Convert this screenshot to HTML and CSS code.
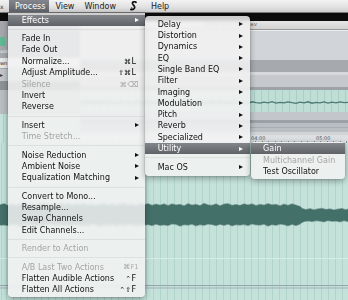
FILE: index.html
```html
<!DOCTYPE html>
<html>
<head>
<meta charset="utf-8">
<title>Process menu</title>
<link rel="stylesheet" href="styles.css">
</head>
<body>
<div class="screen">
  <div class="menubar">
    <span class="mb-x">x</span>
    <span class="mb-item active">Process</span>
    <span class="mb-item">View</span>
    <span class="mb-item">Window</span>
    <span class="mb-item mb-script"><svg width="7" height="10" viewBox="0 0 7 10"><path d="M6 1.3 C4.4 0.2 2.1 0.8 2.5 2.6 C2.8 3.9 4.7 4.6 4.7 6.3 C4.7 8.1 2.6 9.2 0.9 8.4" fill="none" stroke="#111" stroke-width="1.7" stroke-linecap="round"/><path d="M0.9 8.4 C1.9 8.1 2.3 7.3 1.8 6.7" fill="none" stroke="#111" stroke-width="1" stroke-linecap="round"/></svg></span>
    <span class="mb-item">Help</span>
  </div>
  <div class="toolbar"></div>
  <div class="workspace">
    <div class="sidebar">
      <div class="sb-top"></div>
      <div class="sb-icon"><span class="sb-green"></span></div>
      <div class="sb-label">ade</div>
      <div class="sb-field">wn</div>
      <div class="sb-btn">▸</div>
      <div class="sb-gray"></div>
      <div class="sb-dark"></div>
      <div class="sb-teal"></div>
    </div>
    <div class="tracks">
      <div class="doc-title">Turbo funk Riff.wav</div>
      <div class="panel-a"></div>
      <div class="band-a"></div>
      <div class="line-a"></div>
      <div class="panel-b"></div>
      <div class="line-b"></div>
      <div class="track"><svg width="268" height="22" viewBox="0 0 268 22"><polyline fill="none" stroke="#4d7a72" stroke-width="1.3" points="0,12 4,13 8,11.6 12,13.2 16,12.1 20,13.4 24,11.8 28,12.9 32,12.2 36,13.5 40,11.7 44,12.8 48,12.3 52,13.3 56,11.9 60,12.7 64,13.1 68,11.8 72,12.6 76,13.4 80,12 84,12.9 88,11.7 92,13.2 96,12.4 100,13 104,11.9 108,12.8 112,12.2 116,13.3 120,11.8 124,12.7 128,13.1 132,12 136,12.9 140,11.6 144,13.2 148,12.3 152,13 156,11.9 160,12.8 164,12.2 168,13.4 172,11.8 176,12.6 180,13.2 184,12.1 188,12.9 192,11.7 196,13.1 200,12.4 204,12.9 208,11.9 212,12.7 216,13.3 220,12.1 224,12.8 228,11.8 232,13.2 236,12.3 240,12.9 244,11.9 248,13.1 252,12.2 256,12.8 260,11.9 264,12.6 268,12.3"/></svg></div>
      <div class="panel-c"></div>
      <div class="line-c"></div>
      <div class="panel-d"></div>
      <div class="gap-d"></div>
      <div class="ruler"><span>04:00</span><span>05:00</span></div>
    </div>
  </div>
  <div class="editor">
    <svg width="348" height="157" viewBox="0 0 348 157">
      <line x1="0" y1="115.5" x2="348" y2="115.5" stroke="#d6ece6" stroke-width="1"/>
      <line x1="0" y1="142.5" x2="348" y2="142.5" stroke="#96a4ae" stroke-width="1"/>
      <line x1="0" y1="145" x2="348" y2="145" stroke="#a3afb8" stroke-width="1"/>
      <path fill="#44706a" stroke="rgba(70,110,104,0.45)" stroke-width="1.4" d="M0 62 L4 60.8 L8 62.6 L12 61.2 L16 63 L20 61.5 L24 60.6 L28 62.4 L32 61 L36 62.8 L40 61.4 L44 60.5 L48 62.2 L52 61.6 L56 63.1 L60 61 L64 62 L68 60.7 L72 62.5 L76 61.3 L80 62 L84 60.8 L88 62.6 L92 61.2 L96 63 L100 61.5 L104 60.6 L108 62.4 L112 61 L116 62.8 L120 61.4 L124 60.5 L128 62.2 L132 61.6 L136 63.1 L140 61 L144 62 L148 60.7 L152 62.5 L156 61.3 L160 62.3 L164 61 L168 62.7 L172 60.9 L176 62.1 L180 61.4 L184 63 L188 60.8 L192 62.2 L196 61.5 L200 62.8 L204 60.6 L208 61.9 L212 62.5 L216 61.1 L220 62.9 L224 61.3 L228 60.7 L232 62.4 L236 61.6 L240 62.6 L244 61 L248 62.1 L252 60.9 L256 62.7 L260 61.4 L264 62.3 L268 60.8 L272 62 L276 61.5 L280 63 L284 61.2 L288 62.4 L292 60.9 L296 62.2 L300 63.5 L302 65.5 L306 66.8 L310 65.8 L314 67 L318 66 L322 65.4 L326 66.6 L330 65.9 L334 67.1 L338 66.2 L342 65.6 L346 66.9 L348 66 L348 78.5 L344 77.6 L340 78.8 L336 77.9 L332 78.3 L328 77.4 L324 78.7 L320 78 L316 77.5 L312 78.6 L308 77.8 L304 78.4 L301 80 L300 81 L296 82.4 L292 81.2 L288 82.8 L284 81.6 L280 80.9 L276 82.2 L272 81.4 L268 82.9 L264 81.1 L260 82 L256 81.7 L252 80.8 L248 82.5 L244 81.3 L240 82.1 L236 81.5 L232 82.7 L228 81 L224 82.3 L220 81.2 L216 82.6 L212 81.4 L208 80.9 L204 82.2 L200 81.6 L196 82.8 L192 81 L188 82.1 L184 81.5 L180 82.9 L176 81.3 L172 80.8 L168 82.4 L164 81.7 L160 82.2 L156 81 L152 82.6 L148 81.4 L144 82 L140 81.2 L136 82.6 L132 81.4 L128 80.9 L124 82.2 L120 81.6 L116 82.8 L112 81 L108 82.1 L104 81.5 L100 82.9 L96 81.3 L92 80.8 L88 82.4 L84 81.7 L80 82.2 L76 81 L72 82.6 L68 81.4 L64 82 L60 81.2 L56 82.6 L52 81.4 L48 80.9 L44 82.2 L40 81.6 L36 82.8 L32 81 L28 82.1 L24 81.5 L20 82.9 L16 81.3 L12 80.8 L8 82.4 L4 81.7 L0 82 Z"/>
    </svg>
  </div>

  <div class="menu process">
    <div class="mi hl"><span class="lb">Effects</span><span class="arrow"></span></div>
    <div class="sep"></div>
    <div class="mi"><span class="lb">Fade In</span></div>
    <div class="mi"><span class="lb">Fade Out</span></div>
    <div class="mi"><span class="lb">Normalize...</span><span class="sc"><span class="mod">⌘</span><span class="key">L</span></span></div>
    <div class="mi"><span class="lb">Adjust Amplitude...</span><span class="sc"><span class="mod">⇧⌘</span><span class="key">L</span></span></div>
    <div class="mi dis"><span class="lb">Silence</span><span class="sc"><span class="mod">⌘</span><span class="key">⌫</span></span></div>
    <div class="mi"><span class="lb">Invert</span></div>
    <div class="mi"><span class="lb">Reverse</span></div>
    <div class="sep"></div>
    <div class="mi"><span class="lb">Insert</span><span class="arrow"></span></div>
    <div class="mi dis"><span class="lb">Time Stretch...</span></div>
    <div class="sep"></div>
    <div class="mi"><span class="lb">Noise Reduction</span><span class="arrow"></span></div>
    <div class="mi"><span class="lb">Ambient Noise</span><span class="arrow"></span></div>
    <div class="mi"><span class="lb">Equalization Matching</span><span class="arrow"></span></div>
    <div class="sep"></div>
    <div class="mi"><span class="lb">Convert to Mono...</span></div>
    <div class="mi"><span class="lb">Resample...</span></div>
    <div class="mi"><span class="lb">Swap Channels</span></div>
    <div class="mi"><span class="lb">Edit Channels...</span></div>
    <div class="sep"></div>
    <div class="mi dis"><span class="lb">Render to Action</span></div>
    <div class="sep"></div>
    <div class="mi dis"><span class="lb">A/B Last Two Actions</span><span class="sc"><span class="mod">⌘</span><span class="key small">F1</span></span></div>
    <div class="mi"><span class="lb">Flatten Audible Actions</span><span class="sc"><span class="mod">⌃</span><span class="key">F</span></span></div>
    <div class="mi"><span class="lb">Flatten All Actions</span><span class="sc"><span class="mod">⌃⇧</span><span class="key">F</span></span></div>
  </div>

  <div class="menu effects">
    <div class="mi"><span class="lb">Delay</span><span class="arrow"></span></div>
    <div class="mi"><span class="lb">Distortion</span><span class="arrow"></span></div>
    <div class="mi"><span class="lb">Dynamics</span><span class="arrow"></span></div>
    <div class="mi"><span class="lb">EQ</span><span class="arrow"></span></div>
    <div class="mi"><span class="lb">Single Band EQ</span><span class="arrow"></span></div>
    <div class="mi"><span class="lb">Filter</span><span class="arrow"></span></div>
    <div class="mi"><span class="lb">Imaging</span><span class="arrow"></span></div>
    <div class="mi"><span class="lb">Modulation</span><span class="arrow"></span></div>
    <div class="mi"><span class="lb">Pitch</span><span class="arrow"></span></div>
    <div class="mi"><span class="lb">Reverb</span><span class="arrow"></span></div>
    <div class="mi"><span class="lb">Specialized</span><span class="arrow"></span></div>
    <div class="mi hl"><span class="lb">Utility</span><span class="arrow"></span></div>
    <div class="sep"></div>
    <div class="mi"><span class="lb">Mac OS</span><span class="arrow"></span></div>
  </div>

  <div class="menu utility">
    <div class="mi hl"><span class="lb">Gain</span></div>
    <div class="mi dis"><span class="lb">Multichannel Gain</span></div>
    <div class="mi"><span class="lb">Test Oscillator</span></div>
  </div>
</div>
</body>
</html>
```

FILE: styles.css
```css
* { box-sizing: border-box; margin: 0; padding: 0; }
html, body { width: 348px; height: 300px; overflow: hidden; }
body {
  font-family: "DejaVu Sans", "Liberation Sans", sans-serif;
  font-size: 8px;
  color: #111;
  background: #c5e2da;
}
.screen { position: relative; width: 348px; height: 300px; overflow: hidden; }

/* menu bar */
.menubar {
  height: 13px;
  display: flex;
  align-items: stretch;
  gap: 10px;
  line-height: 13px;
  white-space: nowrap;
  color: #1a1a1a;
  background: linear-gradient(#f3f3f3, #e2e2e2 55%, #cfcfcf);
  border-bottom: 1px solid #7a7a7a;
}
.mb-x { font-size: 6px; margin-right: 1.5px; color: #333; }
.mb-item.active {
  padding: 0 4px 0 5.7px;
  margin: 0 -4px 0 -5.7px;
  color: #fff;
  background: linear-gradient(#83868c, #606369);
}
.mb-script { display: flex; align-items: center; margin: 0 4px; }
.toolbar { height: 8px; background: #0c0c0c; }

/* app background */
.workspace { display: flex; height: 122px; }
.sidebar { width: 80px; display: flex; flex-direction: column; background: #a4a8ac; }
.sb-top { height: 16px; }
.sb-icon { height: 10px; display: flex; }
.sb-green { width: 5px; height: 9px; background: #5fb994; border-radius: 1px; }
.sb-label { height: 9px; font-size: 4.5px; line-height: 9px; color: #f0f0f0; white-space: nowrap; }
.sb-field { height: 10px; margin: 2px 0 1px; font-size: 5px; line-height: 10px; color: #222; background: #e6e7e8; white-space: nowrap; }
.sb-btn { height: 12px; font-size: 6px; line-height: 12px; color: #333; background: #c3c6c9; }
.sb-gray { height: 9px; background: #8d9296; }
.sb-dark { height: 24px; background: #b9bdc1; }
.sb-teal {
  flex: 1;
  background-color: #c4e2da;
  background-image: repeating-linear-gradient(90deg, #b0d3ca 0 1px, transparent 1px 7px);
  background-position: 6px 0;
}

.tracks { flex: 1; display: flex; flex-direction: column; min-width: 0; }
.doc-title {
  height: 9px;
  font-size: 5.5px;
  line-height: 7.5px;
  color: #6a6a6a;
  text-align: right;
  padding-right: 91px;
  white-space: nowrap;
  background: linear-gradient(#e6e6e6, #d2d2d2);
  border-bottom: 1.5px solid #989898;
}
.panel-a { height: 30px; background: #d1d4d8; border-top: 1px solid #e9ebed; }
.band-a { height: 12px; background: #a6aaaf; }
.line-a { height: 3px; background: #d6d8db; }
.panel-b { height: 12px; background: #c5c8cc; }
.line-b { height: 3px; background: #9ea3a8; }
.track {
  height: 22px;
  background-color: #bfded5;
  background-image: repeating-linear-gradient(90deg, #abcfc5 0 1px, transparent 1px 7px);
  background-position: 6px 0;
}
.track svg, .editor svg { display: block; }
.panel-c { height: 8px; background: #c3c7cb; }
.line-c { height: 2.7px; background: #9aa0a6; }
.panel-d { height: 9.3px; background: linear-gradient(#b9bec3 0 45%, #a7adb3 45% 55%, #b9bec3 55%); }
.gap-d { height: 3px; background: #d1d4d7; }
.ruler {
  height: 8px;
  display: flex;
  gap: 50.6px;
  padding-left: 171px;
  font-size: 5px;
  line-height: 6px;
  color: #4d5258;
  background-color: #dde0e3;
  background-image: repeating-linear-gradient(90deg, #8c9298 0 1px, transparent 1px 6.5px);
  background-size: 100% 2px;
  background-repeat: no-repeat;
  background-position: 0 100%;
}

.editor {
  height: 157px;
  background-color: #c4e2da;
  background-image: repeating-linear-gradient(90deg, #b0d3ca 0 1px, transparent 1px 7px);
  background-position: 6px 0;
}

/* menus */
.menu {
  position: absolute;
  background: rgba(244, 244, 244, 0.84);
  backdrop-filter: blur(1.5px);
  box-shadow: 0 2px 6px rgba(0, 0, 0, 0.35), 0 0 0 0.5px rgba(0, 0, 0, 0.12);
  white-space: nowrap;
}
.process { left: 8px; top: 13px; width: 137px; padding: 1.5px 0 1px; border-radius: 0 0 4px 4px; }
.effects { left: 145px; top: 16px; width: 105px; padding: 2.65px 0 3px; border-radius: 4px; }
.utility { left: 250.5px; top: 141.5px; width: 94.5px; padding: 1.5px 0 2.3px; border-radius: 4px; }

.mi { display: flex; align-items: center; height: 11.37px; padding: 0 6.5px 0 13.7px; }
.effects .mi { height: 11.3px; padding: 0 7px 0 12.7px; }
.utility .mi { height: 11.35px; padding: 0 6px 0 12.6px; }
.mi .lb { flex: 1; }
.mi.dis { color: #a3a3a3; }
.mi.hl { color: #fff; background: linear-gradient(#82858a, #5f6267); }

.arrow {
  width: 0;
  height: 0;
  border-left: 4px solid currentColor;
  border-top: 2.5px solid transparent;
  border-bottom: 2.5px solid transparent;
}
.sc { display: flex; align-items: baseline; }
.mod { font-size: 7px; }
.key { min-width: 7px; margin-left: 0.5px; }
.key.small { font-size: 6.5px; }

.sep { height: 7.1px; display: flex; align-items: center; }
.sep::before { content: ""; flex: 1; height: 1px; background: rgba(0, 0, 0, 0.07); }
.effects .sep { height: 7.5px; }
```
